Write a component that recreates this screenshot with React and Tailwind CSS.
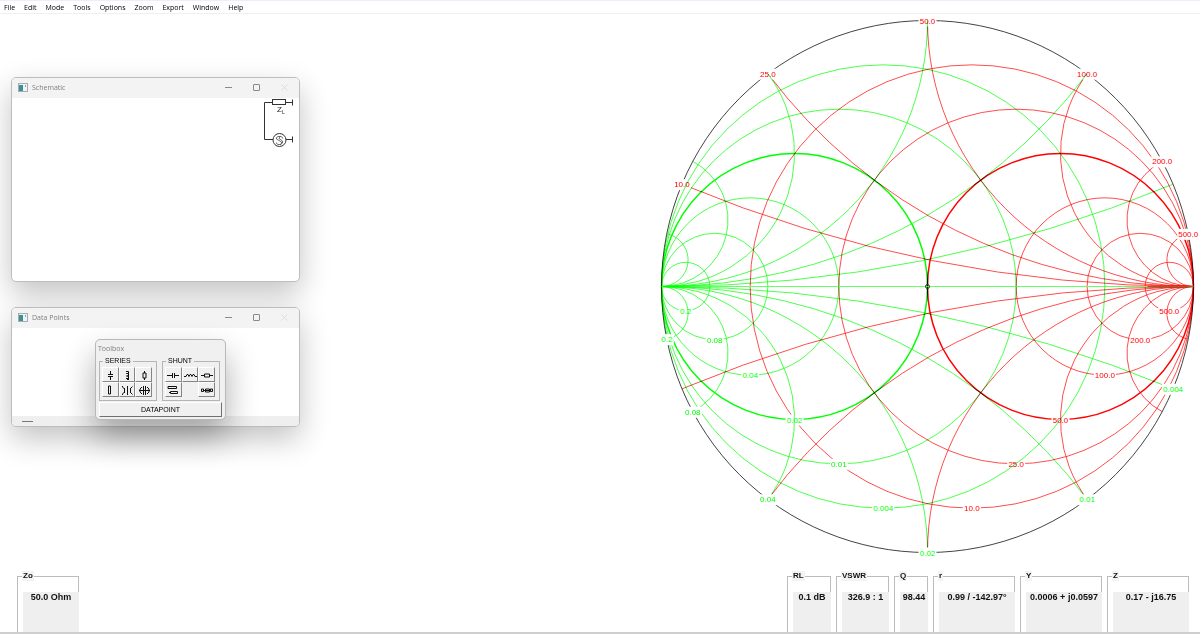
import React from 'react';

const MENU_ITEMS = ['File', 'Edit', 'Mode', 'Tools', 'Options', 'Zoom', 'Export', 'Window', 'Help'];

const READOUTS = [
  { id: 'rl', label: 'RL', value: '0.1 dB', width: 'w-[44px]' },
  { id: 'vswr', label: 'VSWR', value: '326.9 : 1', width: 'w-[53px]' },
  { id: 'q', label: 'Q', value: '98.44', width: 'w-[34px]' },
  { id: 'r', label: 'r', value: '0.99 / -142.97°', width: 'w-[82px]' },
  { id: 'y', label: 'Y', value: '0.0006 + j0.0597', width: 'w-[82px]' },
  { id: 'z', label: 'Z', value: '0.17 - j16.75', width: 'w-[82px]' },
];

// normalised value, impedance label (ohm), admittance label (siemens)
const GRID = [
  { v: 0.2, z: '10.0', y: '0.004' },
  { v: 0.5, z: '25.0', y: '0.01' },
  { v: 1, z: '50.0', y: '0.02' },
  { v: 2, z: '100.0', y: '0.04' },
  { v: 4, z: '200.0', y: '0.08' },
  { v: 10, z: '500.0', y: '0.2' },
];

const R = 266;
const CX = 272.5;
const CY = 272.5;

function ChartLabel({ x, y, text, color }) {
  const w = text.length * 4 + 2;
  return (
    <g>
      <rect x={x - w / 2} y={y - 5} width={w} height={11} fill="white" />
      <text
        x={x}
        y={y + 3}
        textAnchor="middle"
        fill={color}
        className="font-['Liberation_Sans',Arial,sans-serif] text-[8px]"
      >
        {text}
      </text>
    </g>
  );
}

// side = 1 draws the impedance grid, side = -1 the admittance grid
function GridLines({ side, color, field }) {
  return (
    <g>
      {GRID.map(({ v, ...labels }) => {
        const radius = R / (1 + v);
        return (
          <g key={v}>
            <circle
              cx={CX + side * (R - radius)}
              cy={CY}
              r={radius}
              fill="none"
              stroke={color}
              strokeWidth={v === 1 ? 1.5 : 1}
              strokeOpacity={v === 1 ? 1 : 0.7}
              className="mix-blend-multiply"
            />
            <ChartLabel x={CX + side * (R - radius)} y={CY + radius} text={labels[field]} color={color} />
          </g>
        );
      })}
      {GRID.map(({ v, ...labels }) => {
        const radius = R / v;
        const ex = CX + (side * R * (v * v - 1)) / (v * v + 1);
        const dy = (R * 2 * v) / (v * v + 1);
        const edge = CX + side * R;
        const up = side === 1 ? 0 : 1;
        return (
          <g key={v}>
            <path
              d={`M${edge} ${CY}A${radius} ${radius} 0 0 ${1 - up} ${ex} ${CY - dy}M${edge} ${CY}A${radius} ${radius} 0 0 ${up} ${ex} ${CY + dy}`}
              fill="none"
              stroke={color}
              strokeOpacity="0.7"
              className="mix-blend-multiply"
            />
            <ChartLabel x={ex} y={CY - side * dy} text={labels[field]} color={color} />
          </g>
        );
      })}
    </g>
  );
}

function SmithChart() {
  return (
    <svg viewBox="0 0 545 545" className="h-[545px] w-[545px] shrink-0 self-start bg-white" role="img" aria-label="Smith chart">
      <circle cx={CX} cy={CY} r={R} fill="none" stroke="#222" strokeOpacity="0.85" />
      <GridLines side={1} color="#ff0000" field="z" />
      <path d={`M${CX - R} ${CY}H${CX + R}`} stroke="#66ff66" />
      <GridLines side={-1} color="#00ff00" field="y" />
      <path d={`M${CX + 220} ${CY}H${CX + R}`} stroke="#801500" strokeOpacity="0.6" />
      <circle cx={CX} cy={CY} r="2" fill="none" stroke="#204020" />
    </svg>
  );
}

function TitleBar({ title }) {
  return (
    <div className="flex h-5 items-center bg-[#f3f3f3] pr-px pb-0.5 pl-1.5 text-[#808080]">
      <svg viewBox="0 0 10 9" className="h-[9px] w-[10px]" aria-hidden="true">
        <rect x="0.5" y="0.5" width="9" height="8" fill="#eef3f5" stroke="#a5adb2" />
        <rect x="1" y="2" width="4" height="6" fill="#3f8f93" />
        <path d="M7.5 2v2" stroke="#7fb38f" />
      </svg>
      <h2 className="ml-1 flex-1 pt-px font-['Open_Sans','Noto_Sans',sans-serif] text-[7px] leading-[10px]">{title}</h2>
      <button type="button" aria-label="Minimize" className="flex h-[18px] w-7 items-center justify-center">
        <svg viewBox="0 0 7 7" className="h-[7px] w-[7px]"><path d="M0 3.5h7" stroke="#8a8a8a" /></svg>
      </button>
      <button type="button" aria-label="Maximize" className="flex h-[18px] w-7 items-center justify-center">
        <svg viewBox="0 0 7 7" className="h-[7px] w-[7px]"><rect x="0.5" y="0.5" width="6" height="6" rx="0.5" fill="none" stroke="#8a8a8a" /></svg>
      </button>
      <button type="button" aria-label="Close" className="flex h-[18px] w-7 items-center justify-center">
        <svg viewBox="0 0 7 7" className="h-[7px] w-[7px]"><path d="M0.5 0.5l6 6M6.5 0.5l-6 6" stroke="#dedede" /></svg>
      </button>
    </div>
  );
}

const WINDOW = 'flex w-[289px] flex-col overflow-hidden rounded-[5px] border border-[#bdbdbd] bg-white shadow-[0_12px_30px_rgba(0,0,0,0.24)]';

function SchematicWindow() {
  return (
    <section className={`${WINDOW} h-[205px]`}>
      <TitleBar title="Schematic" />
      <div className="flex flex-1 justify-end pr-1">
        <svg viewBox="0 0 34 50" className="h-[50px] w-[34px]" fill="none" stroke="#333" aria-label="Source circuit">
          <path d="M12 4.500H3.500V41.500H12M25 4.500H31.500M31.500 1.500V7.500M25 41.500H31.500M31.500 38.500V44.500" />
          <rect x="11.5" y="1.5" width="13" height="5" />
          <circle cx="18.500" cy="42" r="6.500" />
          <path d="M21.500 40.500v-1l-1.500-1h-3l-1.500 1v1.500l5 3v1.500l-1.500 1h-2l-1.500-1v-1M19 38.500l-1 2 3.500 2.500v2l-2.500 2" strokeWidth="0.7" />
          <text x="16" y="14" fill="#222" stroke="none" className="font-['Liberation_Sans',Arial,sans-serif] text-[8px]">Z</text>
          <text x="21" y="16" fill="#222" stroke="none" className="font-['Liberation_Sans',Arial,sans-serif] text-[5px]">L</text>
        </svg>
      </div>
    </section>
  );
}

function DataPointsWindow() {
  return (
    <section className={`${WINDOW} h-[120px]`}>
      <TitleBar title="Data Points" />
      <div className="flex-1" />
      <div className="flex h-[10px] items-center bg-[#efefef] pl-2.5">
        <span className="h-px w-[11px] bg-[#777]" />
      </div>
    </section>
  );
}

const SERIES_TOOLS = [
  { name: 'Series capacitor', d: 'M8.500 3v3M6 6.500h5M6 8.500h5M8.500 9v3' },
  { name: 'Series inductor', d: 'M7 3.500h2.500v2h-2h2v2.500h-2h2v2.500h-2.500M9.500 4v7M8 11.500h2' },
  { name: 'Series resistor', d: 'M8.500 3v2M7 5h3v5h-3zM8.500 10v2' },
  { name: 'Series line', d: 'M6.500 3h2v8h-2z' },
  { name: 'Series transformer', d: 'M3.500 3v1l2 2v3l-2 2v1M8.500 3v9M13.500 3.500l-2 2v4l2 2M5.500 5v5M11.500 5v5' },
  { name: 'Series coupled line', d: 'M7.500 3v9M9.500 3v9M6 4l-2 2v3l2 2M11 4l2 2v3l-2 2M3 7.500h11' },
];

const SHUNT_TOOLS = [
  { name: 'Shunt capacitor', d: 'M2 7.500h5M7.500 5v5M9.500 5v5M10 7.500h4' },
  { name: 'Shunt inductor', d: 'M2 8.500h2l1-2 1 0 1 2 1-2 1 0 1 2 1-2 1 0 1 2h2' },
  { name: 'Shunt resistor', d: 'M2 7.500h3M5.500 6h5v3h-5zM11 7.500h3' },
  { name: 'Shunt stub', d: 'M3 3.500h8.500v2h-8.500zM4 9.500h2M5.500 8.500h7v2h-7z' },
  null,
  { name: 'Shunt line', d: 'M2.500 6h2v2.500h-2zM5 7.500h2M11.500 6h2v2.500h-2zM6.500 6h4v3h-4zM7 7.500h4M10 7.500h2' },
];

function ToolGroup({ title, tools }) {
  return (
    <fieldset className="min-w-0 flex-1 border border-[#b5b5b5] pr-1 pb-[3px] pl-0.5">
      <legend className="ml-px px-0.5 text-[7px] leading-[8px] text-black">{title}</legend>
      <div className="mt-0.5 grid grid-cols-3">
        {tools.map((tool, i) =>
          tool ? (
            <button
              key={tool.name}
              type="button"
              aria-label={tool.name}
              className="flex h-[15px] items-center justify-center overflow-hidden border border-t-white border-r-[#858585] border-b-[#858585] border-l-white bg-[#f0f0f0]"
            >
              <svg viewBox="0 0 16 14" className="h-[14px] w-[16px] shrink-0" fill="none" stroke="#111">
                <path d={tool.d} />
              </svg>
            </button>
          ) : (
            <span key={i} />
          )
        )}
      </div>
    </fieldset>
  );
}

function Toolbox() {
  return (
    <section className="absolute top-[325px] left-[95px] w-[131px] rounded-[5px] border border-[#b8b8b8] bg-[#f0f0f0] px-[3px] pb-0.5 font-['Liberation_Sans',Arial,sans-serif] shadow-[0_16px_32px_rgba(0,0,0,0.32)]">
      <h2 className="-ml-px pt-1 font-['Open_Sans','Noto_Sans',sans-serif] text-[7px] leading-[9px] text-[#808080]">Toolbox</h2>
      <div className="mt-1 flex gap-[5px] pr-0.5">
        <ToolGroup title="SERIES" tools={SERIES_TOOLS} />
        <ToolGroup title="SHUNT" tools={SHUNT_TOOLS} />
      </div>
      <button
        type="button"
        className="mt-px block h-[15px] w-full border border-t-white border-r-[#707070] border-b-[#707070] border-l-white text-center text-[7px] leading-[12px] text-black"
      >
        DATAPOINT
      </button>
    </section>
  );
}

function Readout({ id, label, value, width }) {
  return (
    <fieldset className={`${width} min-w-0 border border-b-0 border-[#bcbcbc] pl-[5px]`}>
      <legend className="-ml-px bg-[#f3f3f3] px-px text-[8px] leading-[10px] font-bold text-[#111]">
        <label htmlFor={id}>{label}</label>
      </legend>
      <output id={id} className="mt-[11px] -mr-px block h-10 bg-[#efefef] text-center text-[9px] leading-[11px] font-bold whitespace-nowrap text-[#111]">
        {value}
      </output>
    </fieldset>
  );
}

export default function App() {
  return (
    <div className="flex min-h-screen flex-col bg-white font-['Liberation_Sans',Arial,sans-serif]">
      <nav className="flex h-[14px] items-center gap-[9px] border-t border-b border-t-[#efedf9] border-b-[#f0f0f0] px-1 pt-px font-['Open_Sans','Noto_Sans',sans-serif] text-[7px] leading-[10px] text-black">
        {MENU_ITEMS.map((item) => (
          <button key={item} type="button">{item}</button>
        ))}
      </nav>

      <main className="relative flex flex-1 justify-between">
        <div className="flex flex-col gap-[25px] pt-[63px] pl-[11px]">
          <SchematicWindow />
          <DataPointsWindow />
        </div>
        <Toolbox />
        <SmithChart />
      </main>

      <footer className="flex items-end justify-between border-b-2 border-[#cfcdd0] pr-[11px] pl-[17px]">
        <Readout id="zo" label="Zo" value="50.0 Ohm" width="w-[62px]" />
        <div className="flex gap-[5px]">
          {READOUTS.map((item) => (
            <Readout key={item.id} {...item} />
          ))}
        </div>
      </footer>
    </div>
  );
}
